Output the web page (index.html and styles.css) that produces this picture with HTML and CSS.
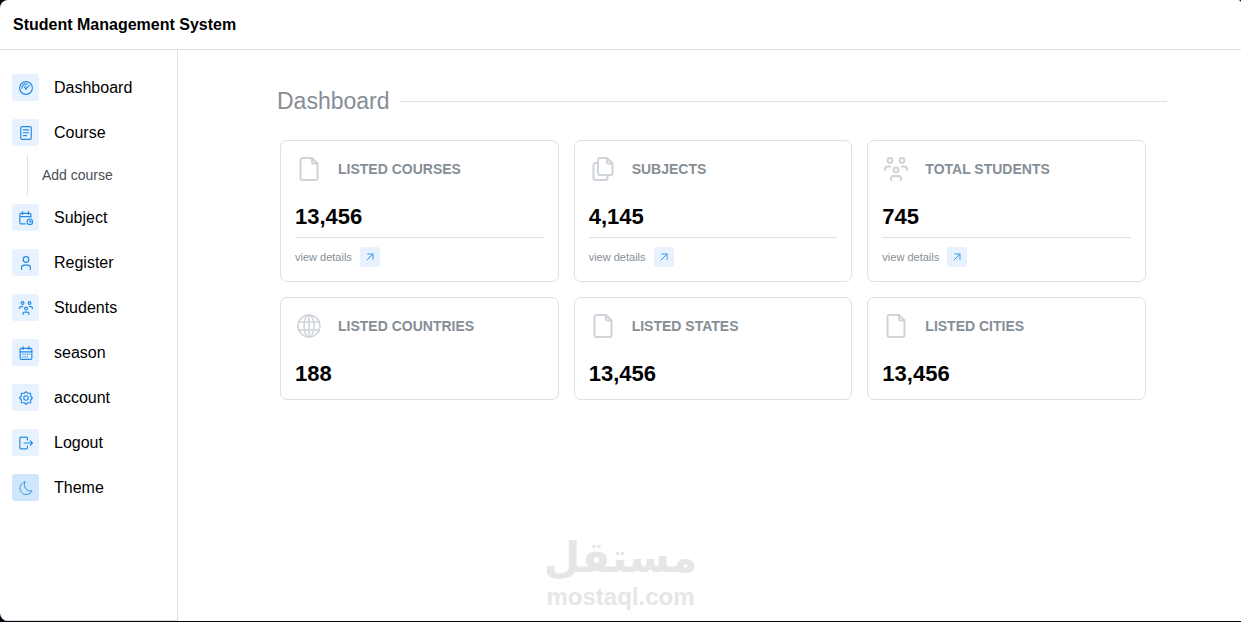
FILE: index.html
```html
<!DOCTYPE html>
<html lang="en">
<head>
  <meta charset="UTF-8">
  <meta name="viewport" content="width=device-width, initial-scale=1.0">
  <title>Student Management System</title>
  <link rel="stylesheet" href="styles.css">
</head>
<body>
  <!-- shared icons -->
  <svg class="sprite" aria-hidden="true">
    <symbol id="i-file" viewBox="0 0 24 24">
      <path d="M15 1H5.500A2 2 0 0 0 3.500 3V21A2 2 0 0 0 5.500 23H18.500A2 2 0 0 0 20.500 21V6.500Z"/>
      <path d="M15 1V5A1.500 1.500 0 0 0 16.500 6.500H20.500"/>
    </symbol>
    <symbol id="i-files" viewBox="0 0 24 24">
      <path d="M16 1H9A2 2 0 0 0 7 3V16A2 2 0 0 0 9 18H19.500A2 2 0 0 0 21.500 16V6.500Z"/>
      <path d="M16 1V5A1.500 1.500 0 0 0 17.500 6.500H21.500"/>
      <path d="M7 6H4.500A2 2 0 0 0 2.500 8V21A2 2 0 0 0 4.500 23H14.500A2 2 0 0 0 16.500 21V18"/>
    </symbol>
    <symbol id="i-people" viewBox="0 0 24 24">
      <circle cx="6" cy="3.500" r="2.400"/>
      <circle cx="18" cy="3.500" r="2.400"/>
      <circle cx="12" cy="13" r="2.400"/>
      <path d="M1 13V12A2.500 2.500 0 0 1 3.500 9.500H6.500M23 13V12A2.500 2.500 0 0 0 20.500 9.500H17.500"/>
      <path d="M7 23V21.500A2.500 2.500 0 0 1 9.500 19H14.500A2.500 2.500 0 0 1 17 21.500V23"/>
    </symbol>
    <symbol id="i-globe" viewBox="0 0 24 24">
      <circle cx="12" cy="12" r="11"/>
      <ellipse cx="12" cy="12" rx="5" ry="11"/>
      <path d="M2 8H22M2 16H22M12 1V23"/>
    </symbol>
    <symbol id="i-arrow" viewBox="0 0 24 24">
      <path d="M3 21L21 3M5 3H21V19"/>
    </symbol>
  </svg>

  <div class="app">
    <header class="topbar">
      <strong class="brand">Student Management System</strong>
    </header>

    <div class="layout">
      <nav class="sidebar">
        <ul class="menu">
          <li>
            <a class="menu-link" href="#">
              <span class="menu-icon"><svg viewBox="0 0 24 24">
                <circle cx="12" cy="12" r="11"/>
                <path d="M5 12.500A7 7 0 0 1 14.500 5.500"/>
                <path d="M12 13L17.500 8M9 11.500A3.500 3.500 0 0 1 11.500 9"/>
                <circle cx="12" cy="13" r="1"/>
              </svg></span>
              Dashboard
            </a>
          </li>
          <li>
            <a class="menu-link" href="#">
              <span class="menu-icon"><svg viewBox="0 0 24 24">
                <rect x="3" y="1" width="18" height="22" rx="2.500"/>
                <path d="M7.500 6.500H16.500M7.500 11.500H16.500M7.500 16.500H13"/>
              </svg></span>
              Course
            </a>
            <ul class="submenu">
              <li><a class="submenu-link" href="#">Add course</a></li>
            </ul>
          </li>
          <li>
            <a class="menu-link" href="#">
              <span class="menu-icon"><svg viewBox="0 0 24 24">
                <path d="M11 22H3.500A2 2 0 0 1 1.500 20V6A2 2 0 0 1 3.500 4H18.500A2 2 0 0 1 20.500 6V10.500M1.500 9.500H20.500M6 1V6M16 1V6"/>
                <circle cx="18.500" cy="18.500" r="4.800"/>
                <path d="M18.500 15.500V18.500H21"/>
              </svg></span>
              Subject
            </a>
          </li>
          <li>
            <a class="menu-link" href="#">
              <span class="menu-icon"><svg viewBox="0 0 24 24">
                <circle cx="12" cy="6" r="4.800"/>
                <path d="M4.500 23V20A4.500 4.500 0 0 1 9 15.500H15A4.500 4.500 0 0 1 19.500 20V23"/>
              </svg></span>
              Register
            </a>
          </li>
          <li>
            <a class="menu-link" href="#">
              <span class="menu-icon"><svg viewBox="0 0 24 24"><use href="#i-people"/></svg></span>
              Students
            </a>
          </li>
          <li>
            <a class="menu-link" href="#">
              <span class="menu-icon"><svg viewBox="0 0 24 24">
                <rect x="2" y="4" width="20" height="19" rx="2"/>
                <path d="M2 10H22M7 1V6M17 1V6"/>
                <path d="M6.500 14H7M10.300 14H10.800M14 14H14.500M17.500 14H18M6.500 18.500H7M10.300 18.500H10.800M14 18.500H14.500"/>
              </svg></span>
              season
            </a>
          </li>
          <li>
            <a class="menu-link" href="#">
              <span class="menu-icon"><svg viewBox="0 0 24 24">
                <path d="M12 1L15 3.800L19.800 4.200L20.200 9L23 12L20.200 15L19.800 19.800L15 20.200L12 23L9 20.200L4.200 19.800L3.800 15L1 12L3.800 9L4.200 4.200L9 3.800Z"/>
                <circle cx="12" cy="12" r="3.800"/>
              </svg></span>
              account
            </a>
          </li>
          <li>
            <a class="menu-link" href="#">
              <span class="menu-icon"><svg viewBox="0 0 24 24">
                <path d="M14.500 7V4A2 2 0 0 0 12.500 2H3.500A2 2 0 0 0 1.500 4V20A2 2 0 0 0 3.500 22H12.500A2 2 0 0 0 14.500 20V17"/>
                <path d="M8.500 12H23M19.500 8.500L23 12L19.500 15.500"/>
              </svg></span>
              Logout
            </a>
          </li>
          <li>
            <button class="menu-link" type="button">
              <span class="menu-icon menu-icon-active"><svg class="thin" viewBox="0 0 24 24">
                <path d="M10 1.500A11 11 0 1 0 22.500 17A11 11 0 0 1 10 1.500Z"/>
              </svg></span>
              Theme
            </button>
          </li>
        </ul>
      </nav>

      <main class="content">
        <div class="heading">
          <h1>Dashboard</h1>
          <span class="heading-line"></span>
        </div>

        <div class="cards">
          <section class="card">
            <div class="card-head">
              <svg viewBox="0 0 24 24"><use href="#i-file"/></svg>
              <h2>LISTED COURSES</h2>
            </div>
            <p class="card-value">13,456</p>
            <a class="card-more" href="#">view details <span class="more-icon"><svg viewBox="0 0 24 24"><use href="#i-arrow"/></svg></span></a>
          </section>

          <section class="card">
            <div class="card-head">
              <svg viewBox="0 0 24 24"><use href="#i-files"/></svg>
              <h2>SUBJECTS</h2>
            </div>
            <p class="card-value">4,145</p>
            <a class="card-more" href="#">view details <span class="more-icon"><svg viewBox="0 0 24 24"><use href="#i-arrow"/></svg></span></a>
          </section>

          <section class="card">
            <div class="card-head">
              <svg viewBox="0 0 24 24"><use href="#i-people"/></svg>
              <h2>TOTAL STUDENTS</h2>
            </div>
            <p class="card-value">745</p>
            <a class="card-more" href="#">view details <span class="more-icon"><svg viewBox="0 0 24 24"><use href="#i-arrow"/></svg></span></a>
          </section>

          <section class="card">
            <div class="card-head">
              <svg class="thin" viewBox="0 0 24 24"><use href="#i-globe"/></svg>
              <h2>LISTED COUNTRIES</h2>
            </div>
            <p class="card-value">188</p>
          </section>

          <section class="card">
            <div class="card-head">
              <svg viewBox="0 0 24 24"><use href="#i-file"/></svg>
              <h2>LISTED STATES</h2>
            </div>
            <p class="card-value">13,456</p>
          </section>

          <section class="card">
            <div class="card-head">
              <svg viewBox="0 0 24 24"><use href="#i-file"/></svg>
              <h2>LISTED CITIES</h2>
            </div>
            <p class="card-value">13,456</p>
          </section>
        </div>
      </main>
    </div>

    <div class="watermark">
      <span class="watermark-ar" lang="ar" dir="rtl">مستقل</span>
      <span class="watermark-en">mostaql.com</span>
    </div>
  </div>
</body>
</html>
```
FILE: styles.css
```css
:root {
  --blue: #228be6;
  --blue-light: #e7f2fe;
  --line: #dee0e2;
  --gray: #868e96;
  --icon-gray: #ced4da;
}

* {
  margin: 0;
  padding: 0;
  box-sizing: border-box;
}

body {
  font-family: "Liberation Sans", Arial, sans-serif;
  font-size: 16px;
  background: #05050f;
  color: #000;
}

a {
  color: inherit;
  text-decoration: none;
}

ul {
  list-style: none;
}

svg {
  fill: none;
  stroke: currentColor;
  stroke-width: 2;
  stroke-linecap: round;
  stroke-linejoin: round;
}

svg.thin {
  stroke-width: 1.5;
}

.sprite {
  display: none;
}

.app {
  position: relative;
  display: flex;
  flex-direction: column;
  min-height: calc(100vh - 1px);
  background: #fff;
  border-radius: 8px 3px 0 8px;
  overflow: hidden;
}

.topbar {
  display: flex;
  align-items: center;
  height: 50px;
  padding: 0 13px;
  border-bottom: 1px solid var(--line);
}

.layout {
  display: flex;
  flex: 1;
}

/* Sidebar */
.sidebar {
  flex: none;
  width: 178px;
  padding: 15px 12px;
  border-right: 1px solid var(--line);
  border-bottom: 1px solid var(--line);
}

.menu-link {
  display: flex;
  align-items: center;
  gap: 15px;
  width: 100%;
  padding: 9px 0;
  border: none;
  background: none;
  color: inherit;
  font: inherit;
  text-align: left;
  cursor: pointer;
}

.menu-icon {
  display: flex;
  align-items: center;
  justify-content: center;
  width: 27px;
  height: 27px;
  border-radius: 3px;
  background: var(--blue-light);
  color: var(--blue);
}

.menu-icon-active {
  background: #d0e6fb;
}

.menu-icon svg {
  width: 14px;
  height: 14px;
}

.submenu {
  margin-left: 15px;
  border-left: 1px solid var(--line);
}

.submenu-link {
  display: block;
  padding-left: 14px;
  font-size: 14px;
  line-height: 40px;
  color: #495057;
}

/* Content */
.content {
  flex: 1;
  padding: 37px 74px 37px 99px;
}

.heading {
  display: flex;
  align-items: center;
  gap: 10px;
  margin-bottom: 25px;
}

.heading h1 {
  font-size: 23px;
  font-weight: normal;
  line-height: 28px;
  color: var(--gray);
}

.heading-line {
  flex: 1;
  border-top: 1px solid var(--line);
}

.cards {
  display: grid;
  grid-template-columns: repeat(3, 1fr);
  gap: 15px;
  margin: 0 21px 0 3px;
}

.card {
  padding: 15px 14px 13px;
  border: 1px solid var(--line);
  border-radius: 7px;
}

.card-head {
  display: flex;
  align-items: center;
  gap: 15px;
  height: 26px;
  color: var(--icon-gray);
}

.card-head svg {
  width: 28px;
  height: 24px;
}

.card-head h2 {
  font-size: 14px;
  color: var(--gray);
}

.card-value {
  margin-top: 23px;
  font-size: 22px;
  font-weight: bold;
  line-height: 24px;
}

.card-more {
  display: flex;
  align-items: center;
  gap: 8px;
  margin-top: 8px;
  padding: 9px 0 1px;
  border-top: 1px solid var(--line);
  font-size: 11px;
  color: var(--gray);
}

.more-icon {
  display: flex;
  align-items: center;
  justify-content: center;
  width: 20px;
  height: 20px;
  border-radius: 3px;
  background: var(--blue-light);
  color: #339af0;
}

.more-icon svg {
  width: 8px;
  height: 8px;
  stroke-width: 3;
}

/* Watermark over the page */
.watermark {
  position: absolute;
  left: 0;
  right: 0;
  bottom: 10px;
  display: flex;
  flex-direction: column;
  align-items: center;
  color: #e6e6e6;
  font-weight: bold;
  pointer-events: none;
}

.watermark-ar {
  font-family: "DejaVu Sans", sans-serif;
  font-size: 42px;
  line-height: 50px;
}

.watermark-en {
  font-size: 24px;
  line-height: 28px;
}
```
